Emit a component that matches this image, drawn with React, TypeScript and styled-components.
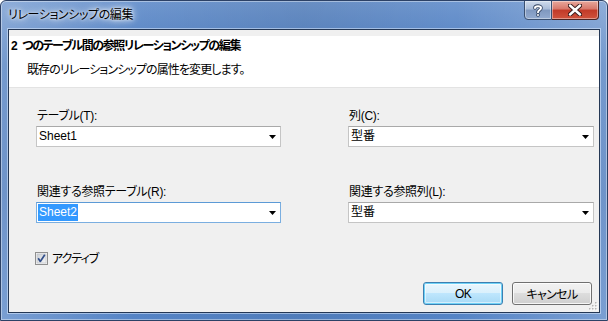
import React from "react";
import styled, { createGlobalStyle } from "styled-components";

const Global = createGlobalStyle`
  html, body { margin: 0; padding: 0; background: #ffffff; }
  body { font-family: "Liberation Sans", "Noto Sans CJK JP", sans-serif; }
  * { box-sizing: border-box; }
`;

const FONT = `"Liberation Sans", "Noto Sans CJK JP", sans-serif`;

const Window = styled.div`
  width: 608px;
  height: 321px;
  display: flex;
  flex-direction: column;
  padding: 0 7px 7px 7px;
  border: 1px solid #2c4166;
  border-radius: 6px 6px 0 0;
  background:
    linear-gradient(90deg, rgba(255,255,255,0.22) 0%, rgba(255,255,255,0) 22%, rgba(0,0,0,0.06) 50%, rgba(255,255,255,0) 75%, rgba(255,255,255,0.22) 100%),
    linear-gradient(180deg, #6f97cf 0%, #4f7ec0 20%, #4877bb 60%, #5584c6 100%);
  box-shadow: inset 0 0 0 1px rgba(255,255,255,0.4);
  overflow: hidden;
`;

const TitleBar = styled.div`
  height: 28px;
  flex: none;
  display: flex;
  align-items: flex-start;
  margin-right: 1px;
`;

const Title = styled.div`
  font-family: ${FONT};
  font-size: 12px;
  font-feature-settings: "palt";
  letter-spacing: -0.4px;
  color: #000;
  line-height: 16px;
  margin-top: 6px;
  margin-left: 0;
  text-shadow: 0 0 6px rgba(255,255,255,0.95), 0 0 10px rgba(255,255,255,0.8), 0 0 3px rgba(255,255,255,0.9);
  flex: 1;
`;

const CaptionButtons = styled.div`
  display: flex;
  margin-top: -1px;
`;

const CapButton = styled.div<{ $kind: "help" | "close" }>`
  height: 20px;
  width: ${(p) => (p.$kind === "help" ? "28px" : "47px")};
  display: flex;
  align-items: center;
  justify-content: center;
  border: 1px solid ${(p) => (p.$kind === "help" ? "#3a5071" : "#4a2424")};
  border-left-width: ${(p) => (p.$kind === "close" ? "0" : "1px")};
  border-radius: ${(p) => (p.$kind === "help" ? "0 0 0 4px" : "0 0 4px 0")};
  background: ${(p) =>
    p.$kind === "help"
      ? "linear-gradient(180deg, #d0dcec 0%, #a9bcd8 45%, #7f98bf 50%, #93abd0 100%)"
      : "linear-gradient(180deg, #e8a89c 0%, #d7776a 45%, #c23a28 50%, #d0533d 100%)"};
  box-shadow: inset 0 0 0 1px rgba(255,255,255,0.4);
`;

const Client = styled.div`
  flex: 1;
  position: relative;
  display: flex;
  flex-direction: column;
  background: #f0f0f0;
  border: 1px solid #243754;
  box-shadow: 0 0 0 1px rgba(220,235,255,0.55);
`;

const Header = styled.div`
  margin-top: 6px;
  height: 52px;
  background: #ffffff;
  border-bottom: 1px solid #e3e3e3;
  padding: 2px 0 0 2px;
  font-family: ${FONT};
  font-feature-settings: "palt";
  color: #000;
`;

const Heading = styled.div`
  font-size: 12px;
  font-weight: bold;
  line-height: 16px;
  letter-spacing: -1.4px;
  word-spacing: 4px;
`;

const Subtitle = styled.div`
  font-size: 12px;
  line-height: 16px;
  margin-top: 8px;
  padding-left: 16px;
  letter-spacing: -0.9px;
`;

const Form = styled.div`
  display: grid;
  grid-template-columns: 245px 246px;
  column-gap: 67px;
  row-gap: 37px;
  padding: 20px 0 0 27px;
`;

const Field = styled.div`
  display: flex;
  flex-direction: column;
`;

const Label = styled.div`
  font-family: ${FONT};
  font-feature-settings: "palt";
  font-size: 12px;
  line-height: 16px;
  letter-spacing: -0.3px;
  color: #000;
  padding-left: 1px;
  margin-bottom: 2px;
`;

const Combo = styled.div<{ $focused?: boolean }>`
  height: 21px;
  display: flex;
  align-items: center;
  background: #ffffff;
  border: 1px solid ${(p) => (p.$focused ? "#7aaee0" : "#c5c5c5")};
  border-top-color: ${(p) => (p.$focused ? "#5c9ad6" : "#a9a9a9")};
  padding: 0 4px 0 1px;
`;

const ComboValue = styled.div`
  flex: 1;
  font-family: ${FONT};
  font-size: 12px;
  line-height: 17px;
  color: #000;
`;

const Selected = styled.span`
  background: #3399ff;
  color: #ffffff;
  padding: 0 1px;
  display: inline-block;
  line-height: 17px;
`;

const Plain = styled.span`
  padding: 0 1px;
`;

const CheckRow = styled.div`
  display: flex;
  align-items: center;
  gap: 4px;
  margin: 29px 0 0 26px;
  height: 13px;
`;

const CheckLabel = styled.span`
  font-family: ${FONT};
  font-feature-settings: "palt";
  font-size: 12px;
  line-height: 16px;
  letter-spacing: -1px;
  color: #000;
`;

const Footer = styled.div`
  margin-top: auto;
  display: flex;
  justify-content: flex-end;
  gap: 9px;
  padding: 0 7px 7px 0;
`;

const Button = styled.div<{ $default?: boolean }>`
  width: 80px;
  height: 23px;
  display: flex;
  align-items: center;
  justify-content: center;
  font-family: ${FONT};
  font-feature-settings: "palt";
  font-size: 12px;
  letter-spacing: -0.6px;
  color: #000;
  border-radius: 3px;
  border: 1px solid ${(p) => (p.$default ? "#3c7fb1" : "#707070")};
  background: ${(p) =>
    p.$default
      ? "linear-gradient(180deg, #eaf6fd 0%, #d9f0fc 49%, #bee6fd 50%, #a7d9f5 100%)"
      : "linear-gradient(180deg, #f2f2f2 0%, #ebebeb 49%, #dddddd 50%, #cfcfcf 100%)"};
  box-shadow: ${(p) =>
    p.$default ? "inset 0 0 0 1px #6fd2f7, inset 0 0 0 2px rgba(255,255,255,0.5)" : "inset 0 0 0 1px rgba(255,255,255,0.8)"};
`;

const Grip = styled.svg`
  position: absolute;
  right: 1px;
  bottom: 1px;
`;

const Arrow = () => (
  <svg width="7" height="4" viewBox="0 0 7 4">
    <path d="M0 0 H7 L3.5 4 Z" fill="#000" />
  </svg>
);

const CheckBox = () => (
  <svg width="13" height="13" viewBox="0 0 13 13">
    <defs>
      <linearGradient id="cbg" x1="0" y1="0" x2="1" y2="1">
        <stop offset="0" stopColor="#cbcfd5" />
        <stop offset="1" stopColor="#f6f6f6" />
      </linearGradient>
    </defs>
    <rect x="0.5" y="0.5" width="12" height="12" fill="#f4f4f4" stroke="#8f8f8f" />
    <rect x="2" y="2" width="9" height="9" fill="url(#cbg)" stroke="#b8bcc2" strokeWidth="0.6" />
    <path d="M3.2 6.3 L5.3 9.4 L9.8 2.8" fill="none" stroke="#324f8a" strokeWidth="1.7" strokeLinejoin="round" />
  </svg>
);

export default function App() {
  return (
    <>
      <Global />
      <Window>
        <TitleBar>
          <Title>リレーションシップの編集</Title>
          <CaptionButtons>
            <CapButton $kind="help">
              <svg width="10" height="13" viewBox="0 0 10 13">
                <path d="M2 4 C2 1.5 8 1.5 8 4 C8 6 5 6 5 8.2" fill="none" stroke="#2e3f5c" strokeWidth="3.6" strokeLinecap="round" />
                <circle cx="5" cy="11" r="1.8" fill="#2e3f5c" />
                <path d="M2 4 C2 1.5 8 1.5 8 4 C8 6 5 6 5 8.2" fill="none" stroke="#ffffff" strokeWidth="2" strokeLinecap="round" />
                <circle cx="5" cy="11" r="1" fill="#ffffff" />
              </svg>
            </CapButton>
            <CapButton $kind="close">
              <svg width="14" height="12" viewBox="0 0 14 12">
                <path d="M2 1.5 L12 10.5 M12 1.5 L2 10.5" stroke="#3a1d1d" strokeWidth="4.4" strokeLinecap="round" />
                <path d="M2 1.5 L12 10.5 M12 1.5 L2 10.5" stroke="#ffffff" strokeWidth="2.4" strokeLinecap="round" />
              </svg>
            </CapButton>
          </CaptionButtons>
        </TitleBar>
        <Client>
          <Header>
            <Heading>2 つのテーブル間の参照リレーションシップの編集</Heading>
            <Subtitle>既存のリレーションシップの属性を変更します。</Subtitle>
          </Header>
          <Form>
            <Field>
              <Label>テーブル(T):</Label>
              <Combo>
                <ComboValue><Plain>Sheet1</Plain></ComboValue>
                <Arrow />
              </Combo>
            </Field>
            <Field>
              <Label>列(C):</Label>
              <Combo>
                <ComboValue><Plain>型番</Plain></ComboValue>
                <Arrow />
              </Combo>
            </Field>
            <Field>
              <Label>関連する参照テーブル(R):</Label>
              <Combo $focused>
                <ComboValue><Selected>Sheet2</Selected></ComboValue>
                <Arrow />
              </Combo>
            </Field>
            <Field>
              <Label>関連する参照列(L):</Label>
              <Combo>
                <ComboValue><Plain>型番</Plain></ComboValue>
                <Arrow />
              </Combo>
            </Field>
          </Form>
          <CheckRow>
            <CheckBox />
            <CheckLabel>アクティブ</CheckLabel>
          </CheckRow>
          <Footer>
            <Button $default>OK</Button>
            <Button>キャンセル</Button>
          </Footer>
          <Grip width="10" height="10" viewBox="0 0 10 10">
            {[
              [8, 2], [8, 5], [5, 5], [8, 8], [5, 8], [2, 8],
            ].map(([x, y], i) => (
              <g key={i}>
                <rect x={x} y={y} width="1.5" height="1.5" fill="#ffffff" />
                <rect x={x - 1} y={y - 1} width="1.5" height="1.5" fill="#b5b5b5" />
              </g>
            ))}
          </Grip>
        </Client>
      </Window>
    </>
  );
}
